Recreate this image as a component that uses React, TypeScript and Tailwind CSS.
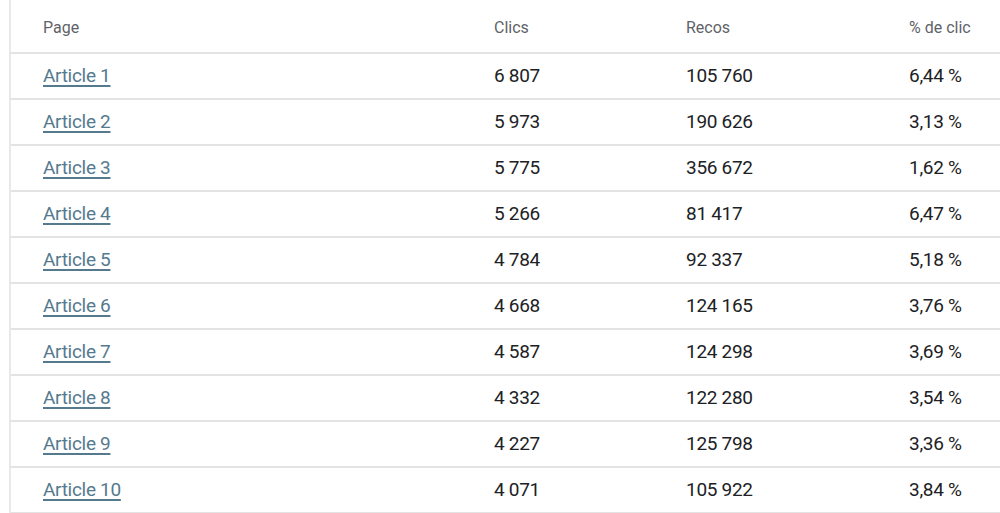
import React from "react";

const rows: [string, string, string, string][] = [
  ["Article 1", "6 807", "105 760", "6,44 %"],
  ["Article 2", "5 973", "190 626", "3,13 %"],
  ["Article 3", "5 775", "356 672", "1,62 %"],
  ["Article 4", "5 266", "81 417", "6,47 %"],
  ["Article 5", "4 784", "92 337", "5,18 %"],
  ["Article 6", "4 668", "124 165", "3,76 %"],
  ["Article 7", "4 587", "124 298", "3,69 %"],
  ["Article 8", "4 332", "122 280", "3,54 %"],
  ["Article 9", "4 227", "125 798", "3,36 %"],
  ["Article 10", "4 071", "105 922", "3,84 %"],
];

export default function App() {
  return (
    <div
      className="w-[1000px] h-[513px] overflow-hidden bg-white"
      style={{ fontFamily: "Roboto, 'Liberation Sans', sans-serif" }}
    >
      <div className="ml-[9px] h-full border-l-2 border-[#e9e9e9]">
        <div className="grid h-[54px] grid-cols-[451px_192px_223px_1fr] items-center border-b-2 border-[#e3e3e3] pl-[32px] pt-[4px] text-[16px] text-[#5f6368]">
          <div>Page</div>
          <div>Clics</div>
          <div>Recos</div>
          <div>% de clic</div>
        </div>
        {rows.map((r) => (
          <div
            key={r[0]}
            className="grid h-[46px] grid-cols-[451px_192px_223px_1fr] items-center border-b-2 border-[#e3e3e3] pl-[32px] text-[19px] tracking-[-0.3px] text-[#202124]"
          >
            <div>
              <a
                href="#"
                className="text-[#557a8e] underline decoration-2 underline-offset-[3px]"
              >
                {r[0]}
              </a>
            </div>
            <div>{r[1]}</div>
            <div>{r[2]}</div>
            <div>{r[3]}</div>
          </div>
        ))}
      </div>
    </div>
  );
}
